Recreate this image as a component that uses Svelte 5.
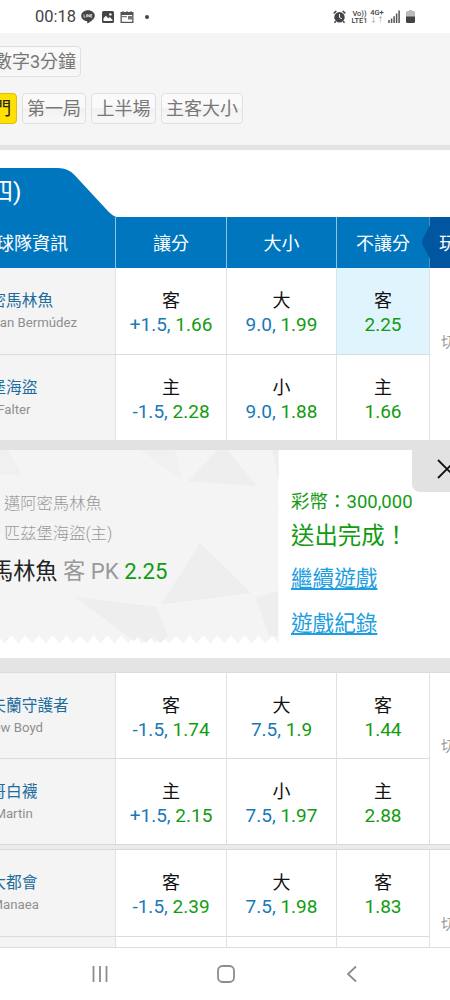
<script lang="ts">
    interface Bet {
        label: string;
        line?: string;
        odds: string;
        active?: boolean;
    }

    interface Team {
        name: string;
        pitcher: string;
        bets: Bet[];
    }

    const filters = ["第一局", "上半場", "主客大小"];
    const columns = ["讓分", "大小", "不讓分"];

    const games: Team[][] = [
        [
            {
                name: "邁阿密馬林魚",
                pitcher: "Jonathan Bermúdez",
                bets: [
                    { label: "客", line: "+1.5,", odds: "1.66" },
                    { label: "大", line: "9.0,", odds: "1.99" },
                    { label: "客", odds: "2.25", active: true },
                ],
            },
            {
                name: "匹茲堡海盜",
                pitcher: "Bailey Falter",
                bets: [
                    { label: "主", line: "-1.5,", odds: "2.28" },
                    { label: "小", line: "9.0,", odds: "1.88" },
                    { label: "主", odds: "1.66" },
                ],
            },
        ],
        [
            {
                name: "克里夫蘭守護者",
                pitcher: "Matthew Boyd",
                bets: [
                    { label: "客", line: "-1.5,", odds: "1.74" },
                    { label: "大", line: "7.5,", odds: "1.9" },
                    { label: "客", odds: "1.44" },
                ],
            },
            {
                name: "芝加哥白襪",
                pitcher: "Davis Martin",
                bets: [
                    { label: "主", line: "+1.5,", odds: "2.15" },
                    { label: "小", line: "7.5,", odds: "1.97" },
                    { label: "主", odds: "2.88" },
                ],
            },
        ],
        [
            {
                name: "紐約大都會",
                pitcher: "Sean Manaea",
                bets: [
                    { label: "客", line: "-1.5,", odds: "2.39" },
                    { label: "大", line: "7.5,", odds: "1.98" },
                    { label: "客", odds: "1.83" },
                ],
            },
            {
                name: "",
                pitcher: "",
                bets: [
                    { label: "", odds: "" },
                    { label: "", odds: "" },
                    { label: "", odds: "" },
                ],
            },
        ],
    ];

    // Torn lower edge of the ticket, drawn from right to left
    const pitch = 13.72;
    let teeth = "";
    for (let i = 18; i >= -2; i--) {
        const x = 25.2 + i * pitch;
        teeth += ` L${(x + pitch / 2).toFixed(1)} 193.5 L${x.toFixed(1)} 185.5`;
    }
    const ticketPath = `M0 0 H278.5 V189 ${teeth} Z`;
</script>

{#snippet game(teams: Team[])}
    <section class="game">
        <div class="teams">
            {#each teams as team}
                <div class="row">
                    <div class="team">
                        <div class="name">{team.name}</div>
                        <div class="pitcher">{team.pitcher}</div>
                    </div>
                    {#each team.bets as bet}
                        <div class="bet" class:active={bet.active}>
                            <div class="label">{bet.label}</div>
                            <div class="value">
                                {#if bet.line}<span class="line">{bet.line}</span>{/if}
                                <span class="odds">{bet.odds}</span>
                            </div>
                        </div>
                    {/each}
                </div>
            {/each}
        </div>
        <div class="more">切換</div>
    </section>
{/snippet}

<div class="phone">
    <header class="status">
        <span class="time">00:18</span>
        <svg class="line-icon" width="14" height="14" viewBox="0 0 14 14">
            <path d="M7 .3C3.2.3.2 2.7.2 5.8c0 2.8 2.4 5 5.7 5.4.7.2.4 1.3.4 2.3 2.6-1.3 7.5-4.3 7.5-7.7C13.8 2.7 10.8.3 7 .3z" fill="#444" />
            <path d="M3 4.3v2.9h1.5M5.6 4.3v2.9M6.7 7.2V4.4l1.7 2.7V4.3M11.2 4.4H9.7v2.8h1.5M9.7 5.8h1.4" fill="none" stroke="#fff" stroke-width=".7" />
        </svg>
        <svg class="photo-icon" width="12" height="12" viewBox="0 0 12 12">
            <rect width="12" height="12" rx="1.5" fill="#444" />
            <path d="M1.5 10V7.2l2.4-2.4 2.3 2.5 1.5-1.2 2.8 2.6V10z" fill="#fff" />
            <circle cx="8.4" cy="3.4" r="1.2" fill="#fff" />
        </svg>
        <svg class="news-icon" width="14" height="12" viewBox="0 0 14 12">
            <path d="M.5 1h13v11H.5z" fill="#555" />
            <path d="M1.8 4h10.4v6.800H1.8z" fill="#fff" />
            <path d="M1.8 5h5v1.200h-5zM8 5h4.200v3.500H8z" fill="#777" />
            <path d="M3 0v1.500M7 0v1.500M11 0v1.500" stroke="#555" />
        </svg>
        <i class="dot"></i>
        <div class="signals">
            <svg width="13" height="14" viewBox="0 0 13 14">
                <path d="M.7 3.4 3.3 1M12.3 3.4 9.7 1M2.8 11.2l-1.3 1.6M10.2 11.2l1.3 1.6" stroke="#444" stroke-width="1.5" />
                <circle cx="6.5" cy="7.2" r="5.2" fill="#444" />
                <path d="M6.5 4.2v3.3l2.3 1.2" fill="none" stroke="#fff" />
            </svg>
            <span class="carrier">Vo))<br />LTE1</span>
            <span class="network">4G+<br /><small>↓↑</small></span>
            <svg width="12" height="13" viewBox="0 0 12 13">
                <path d="M1 13v-3M3.6 13V8.5M6.1 13V6.3M8.6 13V3.4M11.1 13V.5" stroke="#555" stroke-width="1.5" />
            </svg>
            <svg class="battery" width="9" height="13" viewBox="0 0 9 13">
                <path d="M3 0h3v1h1.5Q9 1 9 2.5V7H0V2.5Q0 1 1.5 1H3z" fill="#bbb" />
                <path d="M0 6.5h9v5Q9 13 7.5 13h-6Q0 13 0 11.5z" fill="#444" />
            </svg>
        </div>
    </header>

    <nav class="filters">
        <div class="tags first">
            <button class="tag">數字3分鐘</button>
        </div>
        <div class="tags second">
            <button class="tag selected">熱門</button>
            {#each filters as filter}
                <button class="tag">{filter}</button>
            {/each}
        </div>
    </nav>

    <div class="date">
        <div class="date-text">(四)</div>
        <svg width="64" height="49" viewBox="0 0 64 49">
            <path d="M0 0H4Q14 0 20.5 7L52 41Q58 48 63 49H0z" fill="#0076be" />
        </svg>
    </div>

    <div class="head">
        <div class="head-team">球隊資訊</div>
        {#each columns as column}
            <div class="head-cell">{column}</div>
        {/each}
        <div class="head-more">
            玩法
            <svg class="arrow" width="8" height="34" viewBox="0 0 8 34">
                <path d="M8 0 .5 14.5q-1 2.5 0 5L8 34z" fill="#0057a0" />
            </svg>
        </div>
    </div>

    {@render game(games[0])}

    <section class="slip">
        <div class="ticket">
            <svg class="paper" width="279" height="194" viewBox="0 0 279 194">
                <path d={ticketPath} fill="#f4f4f4" />
                <path d="M0 0h8l14 25H0z" fill="#f0f0f0" />
                <path d="M140 0h35l7 30z" fill="#f0f0f0" />
                <path d="M218 0h9l30 36-69-5z" fill="#eee" />
                <path d="M272 0h6.5v30z" fill="#eee" />
                <path d="M200 93l51 50-90 12z" fill="#eee" />
                <path d="M73 145l83 11 12 30-3 3-5 4-7-7-7 7-7-7-5 5z" fill="#eee" />
                <path d="M256 148l22-7v45h-9z" fill="#eee" />
                <path d="M73 146l83 10 95-12 27-5M200 93l78-40M22 30l30 40" fill="none" stroke="#f7f7f7" />
            </svg>
            <div class="ticket-text">
                <div class="side">邁阿密馬林魚</div>
                <div class="side">匹茲堡海盜(主)</div>
                <div class="pick"><b>馬林魚</b> 客 PK <em>2.25</em></div>
            </div>
        </div>
        <div class="result">
            <div class="coins">彩幣：300,000</div>
            <div class="done">送出完成！</div>
            <a href="#play">繼續遊戲</a>
            <a href="#history">遊戲紀錄</a>
        </div>
        <button class="close" aria-label="關閉">
            <svg width="20" height="20" viewBox="0 0 20 20">
                <path d="M1 1l18 18M19 1 1 19" stroke="#111" stroke-width="1.8" />
            </svg>
        </button>
    </section>

    <div class="next">
        {@render game(games[1])}
    </div>
    <div class="gap"></div>
    <div class="last">
        {@render game(games[2])}
    </div>

    <footer class="softkeys">
        <svg width="18" height="18" viewBox="0 0 18 18">
            <path d="M2.5 1v16M9 1v16M15.5 1v16" stroke="#8c8c8c" stroke-width="1.8" />
        </svg>
        <svg class="home" width="18" height="18" viewBox="0 0 18 18">
            <rect x="1" y="1" width="16" height="16" rx="4.5" fill="none" stroke="#8c8c8c" stroke-width="1.8" />
        </svg>
        <svg width="12" height="18" viewBox="0 0 12 18">
            <path d="M10 1.5 2 9l8 7.5" fill="none" stroke="#8c8c8c" stroke-width="1.8" />
        </svg>
    </footer>
</div>

<style>
    :global(body) {
        margin: 0;
        overflow: hidden;
    }

    .phone {
        width: 450px;
        height: 1000px;
        overflow: hidden;
        display: flex;
        flex-direction: column;
        background: #fff;
        font-family: Roboto, "Noto Sans CJK TC", sans-serif;
        white-space: nowrap;
    }

    .phone > * {
        flex-shrink: 0;
        box-sizing: border-box;
    }

    svg {
        display: block;
        flex-shrink: 0;
    }

    button {
        font-family: inherit;
        margin: 0;
    }

    .status {
        height: 33px;
        padding: 0 35px 0 35px;
        display: flex;
        align-items: center;
        color: #444;
    }

    .time {
        width: 46px;
        font-size: 16.5px;
        line-height: 33px;
    }

    .photo-icon {
        margin-left: 7px;
    }

    .news-icon {
        margin-left: 6px;
    }

    .dot {
        width: 4px;
        height: 4px;
        margin-left: 11px;
        border-radius: 50%;
        background: #444;
    }

    .signals {
        margin-left: auto;
        display: flex;
        align-items: center;
    }

    .carrier,
    .network {
        font-size: 7.5px;
        line-height: 7px;
        font-weight: 500;
        text-align: center;
    }

    .carrier {
        width: 17px;
        margin-left: 5px;
    }

    .network {
        width: 14px;
        margin: 0 4px 0 2px;
    }

    .network small {
        font-size: 7px;
        color: #aaa;
    }

    .battery {
        margin-left: 6px;
    }

    .filters {
        height: 117px;
        padding-top: 13px;
        background: #f5f5f5;
        border-bottom: 5px solid #e3e3e3;
    }

    .tags {
        display: flex;
        gap: 5px;
    }

    .first {
        margin-left: -11px;
    }

    .second {
        margin: 16px 0 0 -30px;
    }

    .tag {
        box-sizing: border-box;
        height: 31px;
        padding: 0 4px;
        border: 1px solid #e0e0e0;
        border-radius: 4px;
        background: linear-gradient(#fafafa 50%, #f2f2f2 50%, #f8f8f8);
        color: #777;
        font-size: 18px;
        line-height: 28px;
    }

    .second .tag {
        padding: 0 4.3px;
    }

    .tag.selected {
        border-color: #d9c200;
        background: #ffe000;
        color: #222;
    }

    .date {
        height: 67px;
        padding-top: 18px;
        display: flex;
    }

    .date-text {
        box-sizing: border-box;
        width: 98px;
        height: 49px;
        margin-left: -44px;
        padding-left: 24px;
        background: #0076be;
        color: #fff;
        font-size: 24.5px;
        line-height: 47px;
    }

    .head {
        display: grid;
        grid-template-columns: 115px 111px 110px 93px 21px;
        height: 51px;
        background: #0076be;
        color: #fff;
        font-size: 18px;
        line-height: 54px;
    }

    .head > * {
        box-sizing: border-box;
        height: 51px;
    }

    .head-team {
        margin-left: -4px;
    }

    .head-cell {
        border-left: 1px solid #8fc4e4;
        text-align: center;
    }

    .head-more {
        position: relative;
        border-left: 1px solid #4c90c4;
        padding-left: 9px;
        background: #0057a0;
    }

    .arrow {
        position: absolute;
        left: -8px;
        top: 8px;
    }

    .game {
        display: flex;
    }

    .teams {
        width: 429px;
    }

    .row {
        display: grid;
        grid-template-columns: 115px 111px 110px 93px;
        height: 86px;
    }

    .row > * {
        box-sizing: border-box;
        height: 86px;
    }

    .row + .row > * {
        border-top: 1px solid #d3dfe3;
        padding-top: 20.5px;
    }

    .team {
        padding-top: 21px;
        background: #f4f4f4;
    }

    .name {
        margin-left: -41px;
        color: #1d6c9c;
        font-size: 15.7px;
        line-height: 24px;
    }

    .pitcher {
        margin-left: -41px;
        color: #8f8f8f;
        font-size: 13.2px;
        line-height: 20px;
    }

    .bet {
        border-left: 1px solid #dbe3e6;
        padding-top: 21px;
        text-align: center;
    }

    .bet.active {
        background: #e0f4fd;
    }

    .label {
        color: #111;
        font-size: 18px;
        line-height: 24px;
    }

    .value {
        font-size: 19px;
        line-height: 24px;
    }

    .line {
        color: #1879b9;
    }

    .odds {
        color: #119c11;
    }

    .more {
        width: 20px;
        border-left: 1px solid #dbe3e6;
        display: flex;
        align-items: center;
        text-indent: 11px;
        color: #999;
        font-size: 15px;
        padding-bottom: 28px;
        overflow: hidden;
    }

    .next .row:first-child > *,
    .next .more {
        border-top: 1px solid #d3dfe3;
    }

    .slip {
        position: relative;
        height: 232px;
        border-top: 10px solid #e2e2e2;
        border-bottom: 14px solid #e4e4e4;
        display: flex;
    }

    .ticket {
        position: relative;
        width: 279px;
    }

    .paper {
        position: absolute;
        left: 0;
        top: 0;
    }

    .ticket-text {
        position: relative;
        padding-top: 39px;
    }

    .side {
        padding-left: 4px;
        color: #999;
        font-size: 16.3px;
        font-weight: 300;
        line-height: 30px;
    }

    .pick {
        margin-left: -9px;
        color: #999;
        font-size: 22.2px;
        line-height: 45px;
    }

    .pick b {
        color: #222;
        font-weight: 400;
    }

    .pick em {
        color: #119c11;
        font-style: normal;
    }

    .result {
        padding: 37px 0 0 12px;
        display: flex;
        flex-direction: column;
        color: #119c11;
    }

    .coins {
        font-size: 18.5px;
        line-height: 30px;
    }

    .done {
        font-size: 23.4px;
        line-height: 39px;
    }

    .result a {
        color: #1c9ee0;
        font-size: 21.6px;
        line-height: 45px;
    }

    .close {
        position: absolute;
        right: 0;
        top: 0;
        width: 38px;
        height: 42px;
        border: 0;
        border-radius: 0 0 0 8px;
        background: #e2e2e2;
        padding: 0 0 4px 25px;
        overflow: hidden;
    }

    .gap {
        height: 6px;
        background: #ebebeb;
        border: solid #d3dadd;
        border-width: 1px 0;
    }

    .last {
        height: 98px;
        overflow: hidden;
        border-bottom: 1px solid #ddd;
    }

    .softkeys {
        flex: 1;
        padding: 0 92px 1px 91px;
        display: flex;
        align-items: center;
        justify-content: space-between;
    }

    .home {
        margin-right: 4px;
    }
</style>
